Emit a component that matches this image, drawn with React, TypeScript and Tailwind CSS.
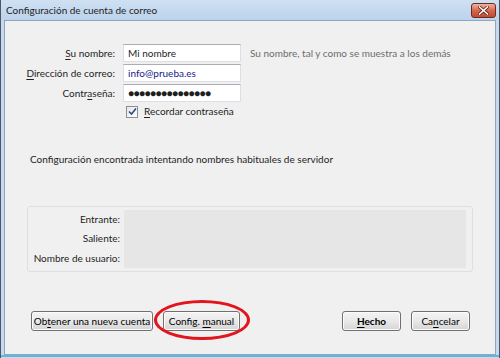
import React from 'react';

const font = { fontFamily: '"Lato", "Open Sans", sans-serif' };

function U({ children }: { children: React.ReactNode }) {
  return <span className="underline underline-offset-2">{children}</span>;
}

function WinButton({
  children,
  className = '',
}: {
  children: React.ReactNode;
  className?: string;
}) {
  return (
    <button
      className={`h-[20px] whitespace-nowrap rounded-[3px] border border-[#707070] bg-gradient-to-b from-[#f4f4f4] via-[#e9e9e9] to-[#d4d4d4] text-[10px] leading-none text-black shadow-[inset_0_0_0_1px_#fcfcfc] ${className}`}
    >
      {children}
    </button>
  );
}

function TextField({ children, className = '' }: { children: React.ReactNode; className?: string }) {
  return (
    <div
      className={`flex h-[18px] w-[118px] items-center border border-[#dcdfe6] border-t-[#abadb3] bg-white px-[4px] ${className}`}
    >
      {children}
    </div>
  );
}

export default function App() {
  return (
    <div
      style={font}
      className="flex h-[358px] w-[500px] flex-col overflow-hidden whitespace-nowrap border-x border-[#4d5866] bg-[#c6d9ee]"
    >
      {/* title bar */}
      <div className="flex h-[20px] shrink-0 items-center justify-between bg-gradient-to-b from-[#cfe0f2] to-[#bcd3ec] pl-[5px] pr-[3px]">
        <span className="text-[10px] text-[#1e1e1e]">Configuración de cuenta de correo</span>
        <div className="flex h-[15px] w-[25px] items-center justify-center rounded-[3px] border border-[#6b2a22] bg-gradient-to-b from-[#eeb3a4] via-[#d8664d] to-[#c44a32]">
          <svg width="11" height="9" viewBox="0 0 11 9">
            <path d="M1.5 1 L9.5 8 M9.5 1 L1.5 8" stroke="#5a1d14" strokeWidth="3" strokeLinecap="square" />
            <path d="M1.5 1 L9.5 8 M9.5 1 L1.5 8" stroke="#ffffff" strokeWidth="1.6" strokeLinecap="square" />
          </svg>
        </div>
      </div>

      {/* client area */}
      <div className="relative mx-[3px] flex h-[335px] shrink-0 flex-col border border-[#8fa6bf] bg-[#f0f0f0] text-[10px] text-[#1e1e1e]">
        {/* account form */}
        <div className="mt-[23px] grid grid-cols-[110px_118px_auto] gap-x-[8px] gap-y-[2px]">
          <div className="flex items-center justify-end">
            <span>
              <U>S</U>u nombre:
            </span>
          </div>
          <TextField>Mi nombre</TextField>
          <div className="flex items-center pl-[1px] text-[#6d6d6d]">
            Su nombre, tal y como se muestra a los demás
          </div>

          <div className="flex items-center justify-end">
            <span>
              <U>D</U>irección de correo:
            </span>
          </div>
          <TextField className="text-[#1a1a8a]">info@prueba.es</TextField>
          <div />

          <div className="flex items-center justify-end">
            <span>
              Contr<U>a</U>seña:
            </span>
          </div>
          <TextField className="text-[10px] tracking-[-0.5px]">●●●●●●●●●●●●●●●</TextField>
          <div />

          <div />
          <div className="col-span-2 flex items-center gap-[6px] pl-[3px]">
            <div className="flex h-[12px] w-[12px] items-center justify-center border border-[#8f8f8f] bg-gradient-to-br from-[#e6e6e6] to-[#ffffff]">
              <svg width="9" height="9" viewBox="0 0 9 9">
                <path d="M1 4.5 L3.5 7 L8 1.5" fill="none" stroke="#2a4a8a" strokeWidth="1.6" />
              </svg>
            </div>
            <span>
              <U>R</U>ecordar contraseña
            </span>
          </div>
        </div>

        <div className="mt-[33px] pl-[25px]">
          Configuración encontrada intentando nombres habituales de servidor
        </div>

        {/* server summary */}
        <div className="mx-[22px] mt-[39px] flex h-[66px] rounded-[3px] border border-[#dcdfe3] p-[3px] pr-[6px]">
          <div className="flex w-[93px] flex-col justify-around pr-[4px] text-right text-[#1e1e1e]">
            <span>Entrante:</span>
            <span>Saliente:</span>
            <span>Nombre de usuario:</span>
          </div>
          <div className="flex-1 bg-[#e6e6e6]" />
        </div>

        {/* buttons */}
        <div className="mt-[39px] flex items-center pl-[26px] pr-[25px]">
          <WinButton className="w-[122px]">
            Ob<U>t</U>ener una nueva cuenta
          </WinButton>
          <div className="relative ml-[10px]">
            <WinButton className="w-[77px]">
              Config. <U>m</U>anual
            </WinButton>
            <div className="pointer-events-none absolute left-[-9px] top-[-11px] h-[40px] w-[96px] rounded-[50%] border-[3px] border-[#e3141b]" />
          </div>
          <WinButton className="ml-auto w-[59px] font-bold">
            <U>H</U>echo
          </WinButton>
          <WinButton className="ml-[10px] w-[59px]">
            Ca<U>n</U>celar
          </WinButton>
        </div>
      </div>
      <div className="h-[2px] shrink-0 bg-[#5fb8dc]" />
    </div>
  );
}
